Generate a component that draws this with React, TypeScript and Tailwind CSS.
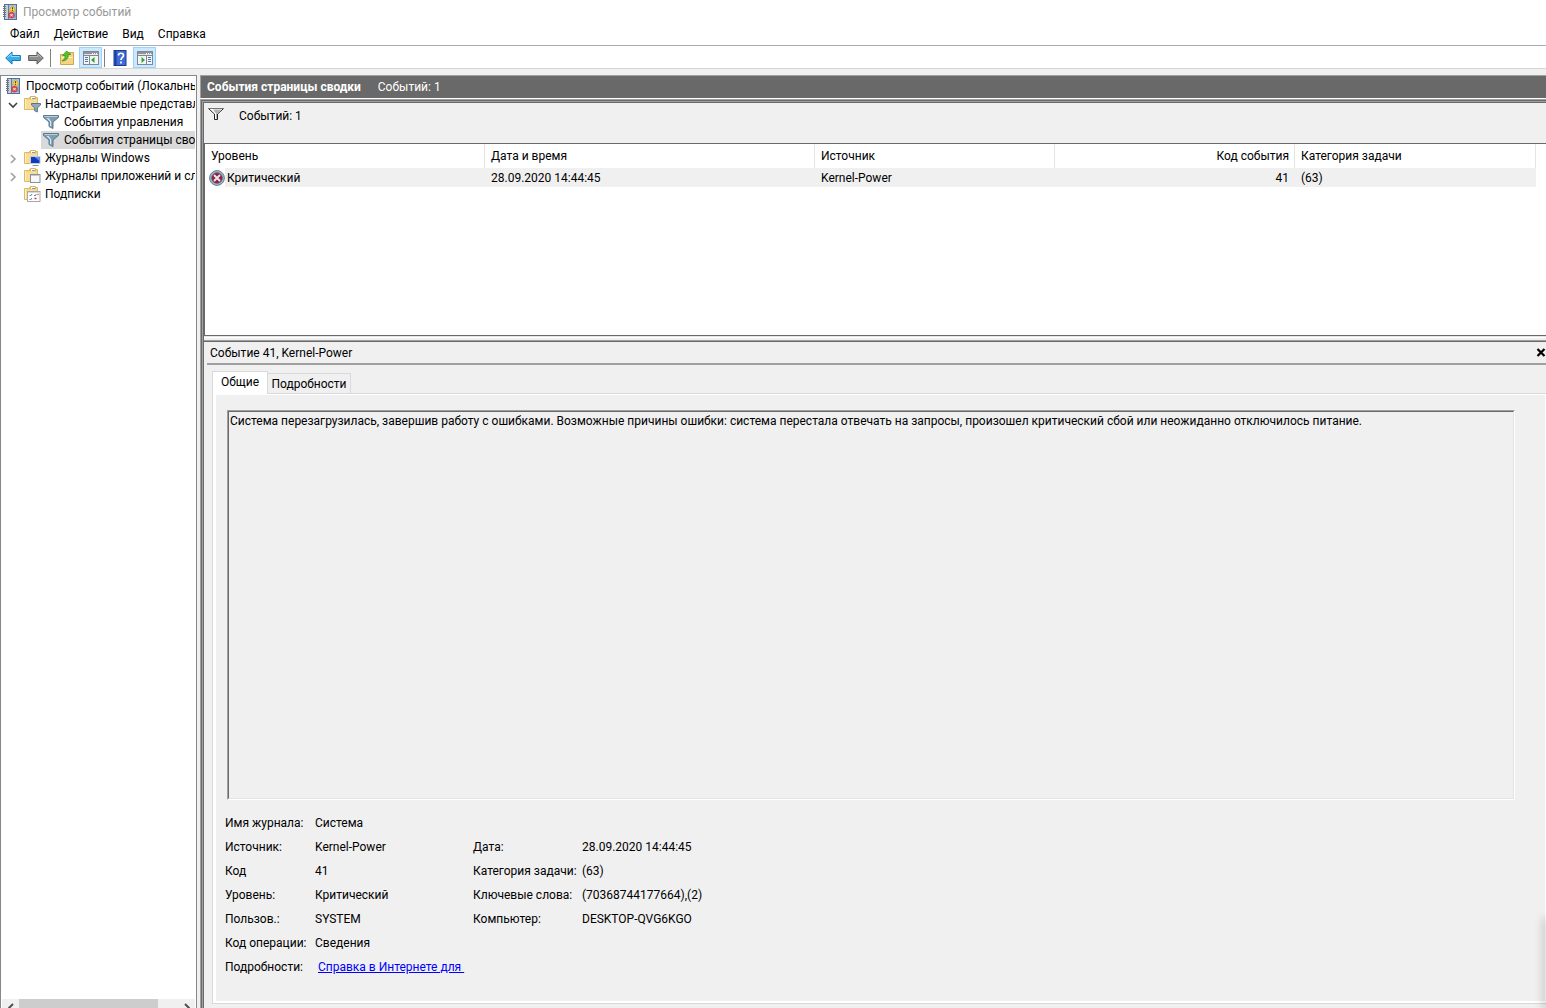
import React from 'react';

type IconProps = { className?: string };

function EventViewerIcon({ className = 'size-4 shrink-0' }: IconProps) {
  return (
    <svg viewBox="0 0 16 16" className={className} aria-hidden="true">
      <rect x="1.500" y="0.500" width="12" height="15" fill="#a9c3e4" stroke="#56709a" />
      <rect x="2" y="1" width="3" height="14" fill="#c9ced6" />
      <path d="M5.500 1v14" stroke="#5f7ba6" />
      <path d="M0 2.500h3M0 4.500h3M0 6.500h3M0 8.500h3M0 10.500h3M0 12.500h3" stroke="#6f757d" />
      <path d="M9.500 1.200l3.500 6H6z" fill="#ffd73b" stroke="#c69a17" strokeWidth="0.6" />
      <path d="M9.500 3.300v2M9.500 6v.8" stroke="#4c3a00" strokeWidth="1" />
      <circle cx="8.500" cy="11.200" r="2.900" fill="#e0524b" stroke="#b52f2a" strokeWidth="0.6" />
      <path d="M7.300 10l2.400 2.400M9.700 10l-2.400 2.400" stroke="#fff" strokeWidth="0.9" />
      <path d="M12 8.500v5.500" stroke="#6786b5" />
    </svg>
  );
}

function FolderBase() {
  return (
    <>
      <path d="M.5 2.500h5v-1h8v12H.5z" fill="#f3d68a" stroke="#dcb962" />
      <path d="M6.500 3V.5h5V3" fill="#fff" stroke="#d9b35a" />
      <path d="M8 2.500h3" stroke="#5fa6e8" />
      <path d="M1 4h12v9H1z" fill="#f9dd95" />
      <path d="M1.500 3v10" stroke="#fff0c4" />
    </>
  );
}

function FunnelIcon() {
  return (
    <svg viewBox="0 0 16 16" className="size-4 shrink-0" aria-hidden="true">
      <path d="M.5 1.500h15v2l-5.500 4.500v6.500l-4-2V8L.5 3.500z" fill="#7d9db4" stroke="#56707f" strokeWidth="0.9" />
      <path d="M1.500 2.500h13" stroke="#b9cfdc" />
      <path d="M3.500 4L7 7.500V12l1.200.6V7.500L5.500 4z" fill="#dbe9f2" />
    </svg>
  );
}

function FolderIcon({ kind }: { kind: 'filter' | 'windows' | 'apps' | 'subs' }) {
  return (
    <svg viewBox="0 0 17 16" className="h-4 w-[17px] shrink-0 overflow-visible" aria-hidden="true">
      <FolderBase />
      {kind === 'filter' && (
        <path d="M7.500 7.500h9v1.500l-3.200 3v4l-2.600-1.200V12L7.500 9z" fill="#8fabc0" stroke="#506b80" strokeWidth="0.9" />
      )}
      {kind === 'windows' && (
        <>
          <rect x="6.500" y="6.500" width="9.500" height="7" fill="#0b3bc0" stroke="#c5ccd8" />
          <path d="M10.500 7h5v4z" fill="#5b8df0" />
          <path d="M8.500 15.500h6" stroke="#8b93a0" />
        </>
      )}
      {kind === 'apps' && (
        <>
          <rect x="6.500" y="6.500" width="9.500" height="8" fill="#f7f8fa" stroke="#8a909a" />
          <path d="M7 7.500h8.500" stroke="#c3c9d2" />
        </>
      )}
      {kind === 'subs' && (
        <>
          <rect x="3.500" y="5.500" width="12.500" height="10" fill="#fff" stroke="#a5a9af" />
          <path d="M4 6.500h12" stroke="#d7dade" />
          <path d="M5.500 9l1 1 1.500-2M10 9l1 1 1.500-2M5.500 13l1 1 1.500-2" stroke="#5574a8" fill="none" strokeWidth="0.9" />
          <path d="M10.500 12.500h2M13.500 8.500h1" stroke="#d83a34" strokeWidth="1.500" />
        </>
      )}
    </svg>
  );
}

function ArrowIcon({ dir }: { dir: 'back' | 'forward' }) {
  return dir === 'back' ? (
    <svg viewBox="0 0 16 14" className="h-[14px] w-4" aria-hidden="true">
      <path d="M.7 7L7 .9v3.600h8.400v5H7v3.600z" fill="#35b0ee" stroke="#2274b4" />
      <path d="M2.300 6.700L6.200 3v2.500h8.200" stroke="#96dcfb" fill="none" />
    </svg>
  ) : (
    <svg viewBox="0 0 16 14" className="h-[14px] w-4" aria-hidden="true">
      <path d="M15.300 7L9 .9v3.600H.6v5H9v3.600z" fill="#8c8c8c" stroke="#5d5d5d" />
      <path d="M1.500 5.500H10V3l3.500 3.700" stroke="#b9b9b9" fill="none" />
    </svg>
  );
}

function UpFolderIcon() {
  return (
    <svg viewBox="0 0 16 16" className="size-4" aria-hidden="true">
      <path d="M1.500 4.500h7l1-2h5v12h-13z" fill="#f5d583" stroke="#cda650" />
      <path d="M2 7.500h12" stroke="#fdeebb" />
      <path d="M3 11C5.500 10 6.200 8 6 5.500H3.500L7.500 1l4.500 3.500H9.200C9.500 8.500 7 11 3 11z" fill="#56c22d" stroke="#2f8f1d" strokeWidth="0.700" />
    </svg>
  );
}

function PaneIcon({ side }: { side: 'left' | 'right' }) {
  return (
    <svg viewBox="0 0 16 14" className="h-[14px] w-4" aria-hidden="true">
      <rect x=".5" y=".5" width="15" height="13" fill="#f4f5f6" stroke="#83888e" />
      <path d="M1 2h14" stroke="#8f9499" strokeWidth="2" />
      <path d="M1 3.500h14" stroke="#e4e7ea" />
      <path d="M1 4.500h14" stroke="#83888e" />
      <path d="M9 2.500h1M11 2.500h1M13 2.500h1" stroke="#fff" />
      {side === 'left' ? (
        <>
          <path d="M6.500 5v8" stroke="#83888e" />
          <path d="M2 6.500h3M2 8.500h3M2 10.500h3" stroke="#3f78b8" />
          <path d="M11.500 6v6l-3.500-3z" fill="#35a52a" />
        </>
      ) : (
        <>
          <path d="M9.500 5v8" stroke="#83888e" />
          <path d="M11 6.500h3M11 8.500h3M11 10.500h3" stroke="#3f78b8" />
          <path d="M4.500 6v6l3.500-3z" fill="#35a52a" />
        </>
      )}
    </svg>
  );
}

function HelpIcon() {
  return (
    <svg viewBox="0 0 14 16" className="h-4 w-[14px]" aria-hidden="true">
      <rect x="1" y=".5" width="12" height="15" fill="#3f6bd6" stroke="#1e3b96" />
      <path d="M2.500 1v14" stroke="#1c3fa3" strokeWidth="2" />
      <path d="M5.500 5.500c0-3 5-3 5 0 0 2-2.500 2-2.500 4.500M8 11.500v2" stroke="#fff" strokeWidth="1.700" fill="none" />
    </svg>
  );
}

function CriticalIcon() {
  return (
    <svg viewBox="0 0 16 16" className="size-4 shrink-0" aria-hidden="true">
      <circle cx="8" cy="8" r="7.400" fill="#9fb6c8" stroke="#64829b" />
      <circle cx="8" cy="8" r="5.300" fill="#94203f" stroke="#6c5970" strokeWidth="0.800" />
      <path d="M5 5l6 6M11 5l-6 6" stroke="#e9eaf0" strokeWidth="1.900" />
    </svg>
  );
}

function OutlineFunnelIcon() {
  return (
    <svg viewBox="0 0 16 12" className="h-3 w-4 shrink-0" aria-hidden="true">
      <path d="M1 1l5.500 5v5.500h3V6L15 1z" fill="#fff" />
      <path d="M5 1.500h8L9 5.500v5H8V5.500z" fill="#b0b0b0" />
      <path d="M0 .5h16" stroke="#777" />
      <path d="M1 1l5.500 5v5.500h3V6L15 1" fill="none" stroke="#222" />
    </svg>
  );
}

function Chevron({ open }: { open: boolean }) {
  return (
    <svg viewBox="0 0 10 10" className="size-[10px]" aria-hidden="true">
      {open ? (
        <path d="M1 3l4 4 4-4" fill="none" stroke="#404040" strokeWidth="1.600" />
      ) : (
        <path d="M3 1l4 4-4 4" fill="none" stroke="#a0a0a0" strokeWidth="1.600" />
      )}
    </svg>
  );
}

function TreeRow({
  label,
  icon,
  indent,
  open,
  selected,
}: {
  label: string;
  icon: React.ReactNode;
  indent: 'root' | 'folder' | 'leaf';
  open?: boolean;
  selected?: boolean;
}) {
  const pad = indent === 'root' ? 'pl-1' : indent === 'folder' ? 'pl-[22px]' : 'pl-[39px]';
  const gap = indent === 'leaf' ? 'gap-[5px] pl-[2px]' : 'gap-1';
  return (
    <li className={`relative flex h-[18px] ${pad}`}>
      {open !== undefined && (
        <button className="absolute top-[5px] left-[6px]" aria-label={open ? 'Свернуть' : 'Развернуть'}>
          <Chevron open={open} />
        </button>
      )}
      <button
        className={`flex min-w-0 flex-1 items-center overflow-hidden whitespace-nowrap ${gap} ${
          selected ? 'bg-[#d9d9d9]' : ''
        }`}
      >
        {icon}
        <span>{label}</span>
      </button>
    </li>
  );
}

const details: [string, string, string?, string?][] = [
  ['Имя журнала:', 'Система'],
  ['Источник:', 'Kernel-Power', 'Дата:', '28.09.2020 14:44:45'],
  ['Код', '41', 'Категория задачи:', '(63)'],
  ['Уровень:', 'Критический', 'Ключевые слова:', '(70368744177664),(2)'],
  ['Пользов.:', 'SYSTEM', 'Компьютер:', 'DESKTOP-QVG6KGO'],
  ['Код операции:', 'Сведения'],
];

function MenuBar() {
  return (
    <nav className="flex h-[22px] items-center gap-[14px] bg-white px-[10px]">
      {['Файл', 'Действие', 'Вид', 'Справка'].map((item) => (
        <button key={item}>{item}</button>
      ))}
    </nav>
  );
}

function Toolbar() {
  return (
    <div className="flex h-6 items-center border-y border-t-[#acacb4] border-b-[#d7d7d7] bg-white pt-px pl-[5px]">
      <button aria-label="Назад"><ArrowIcon dir="back" /></button>
      <button className="ml-[7px]" aria-label="Вперед"><ArrowIcon dir="forward" /></button>
      <span className="ml-[6px] h-[18px] w-px bg-[#808080]" />
      <button className="ml-2" aria-label="Вверх"><UpFolderIcon /></button>
      <button className="ml-1 flex h-[21px] w-[23px] items-center justify-center border border-[#99d1ff] bg-[#cce8ff] pt-px" aria-label="Дерево консоли">
        <PaneIcon side="left" />
      </button>
      <span className="ml-[2px] h-[18px] w-px bg-[#808080]" />
      <button className="ml-2" aria-label="Справка"><HelpIcon /></button>
      <button className="ml-[6px] flex h-[21px] w-[23px] items-center justify-center border border-[#99d1ff] bg-[#cce8ff] pt-px" aria-label="Панель действий">
        <PaneIcon side="right" />
      </button>
    </div>
  );
}

function ConsoleTree() {
  return (
    <aside className="flex w-[197px] shrink-0 flex-col border border-b-0 border-[#828790] bg-white px-px">
      <ul className="pt-px">
        <TreeRow indent="root" icon={<EventViewerIcon />} label="Просмотр событий (Локальный)" />
        <TreeRow indent="folder" open icon={<FolderIcon kind="filter" />} label="Настраиваемые представления" />
        <TreeRow indent="leaf" icon={<FunnelIcon />} label="События управления" />
        <TreeRow indent="leaf" selected icon={<FunnelIcon />} label="События страницы сводки" />
        <TreeRow indent="folder" open={false} icon={<FolderIcon kind="windows" />} label="Журналы Windows" />
        <TreeRow indent="folder" open={false} icon={<FolderIcon kind="apps" />} label="Журналы приложений и служб" />
        <TreeRow indent="folder" icon={<FolderIcon kind="subs" />} label="Подписки" />
      </ul>
      <div className="mt-auto flex h-[9px] overflow-hidden bg-[#f0f0f0]">
        <button className="flex w-[17px] justify-center pt-1" aria-label="Прокрутить влево">
          <svg viewBox="0 0 6 10" className="h-[10px] w-[6px]"><path d="M5 1L1 5l4 4" fill="none" stroke="#505050" strokeWidth="2" /></svg>
        </button>
        <div className="w-[139px] bg-[#cdcdcd]" />
        <button className="ml-auto flex w-[17px] justify-center pt-1" aria-label="Прокрутить вправо">
          <svg viewBox="0 0 6 10" className="h-[10px] w-[6px]"><path d="M1 1l4 4-4 4" fill="none" stroke="#505050" strokeWidth="2" /></svg>
        </button>
      </div>
    </aside>
  );
}

function EventTable() {
  return (
    <div className="h-[193px] shrink-0 border-y border-l border-[#696969] bg-white">
      <table className="w-full table-fixed border-separate border-spacing-0 text-left">
        <colgroup>
          <col className="w-[280px]" />
          <col className="w-[330px]" />
          <col className="w-[240px]" />
          <col className="w-[240px]" />
          <col />
          <col className="w-[10px]" />
        </colgroup>
        <thead>
          <tr className="h-6">
            {['Уровень', 'Дата и время', 'Источник', 'Код события', 'Категория задачи'].map((h) => (
              <th
                key={h}
                className={`border-r border-[#e5e5e5] p-0 font-normal ${h === 'Код события' ? 'pr-[5px] text-right' : 'pl-[6px]'}`}
              >
                {h}
              </th>
            ))}
            <td />
          </tr>
        </thead>
        <tbody>
          <tr className="h-[19px]">
            <td className="p-0 pl-1">
              <div className="flex items-center">
                <CriticalIcon />
                <span className="h-[19px] flex-1 bg-[#f0f0f0] pt-px pl-[2px] leading-[18px]">Критический</span>
              </div>
            </td>
            <td className="bg-[#f0f0f0] p-0 pl-[6px]">28.09.2020 14:44:45</td>
            <td className="bg-[#f0f0f0] p-0 pl-[6px]">Kernel-Power</td>
            <td className="bg-[#f0f0f0] p-0 pr-[6px] text-right">41</td>
            <td className="bg-[#f0f0f0] p-0 pl-[6px]">(63)</td>
            <td />
          </tr>
        </tbody>
      </table>
    </div>
  );
}

function EventDetails() {
  return (
    <section className="flex min-h-0 flex-1 flex-col border-t border-[#a0a0a0]">
      <div className="flex min-h-0 flex-1 flex-col border-t border-[#696969]">
        <header className="ml-[3px] flex h-[23px] items-center justify-between border-b-2 border-[#a0a0a0] pl-[3px]">
          <h2>Событие 41, Kernel-Power</h2>
          <button aria-label="Закрыть">
            <svg viewBox="0 0 10 10" className="size-[10px]"><path d="M1.500 1l7 7M8.500 1l-7 7" stroke="#000" strokeWidth="2.200" /></svg>
          </button>
        </header>
        <div role="tablist" className="mt-[6px] ml-2 flex h-[22px] items-end">
          <button role="tab" aria-selected="true" className="relative z-10 -mb-px h-[23px] w-14 border border-b-0 border-[#d9d9d9] bg-white pb-[3px]">
            Общие
          </button>
          <button role="tab" aria-selected="false" className="-ml-px h-5 w-[84px] border border-b-0 border-[#d9d9d9]">
            Подробности
          </button>
        </div>
        <div role="tabpanel" className="mb-1 ml-2 flex min-h-0 flex-1 flex-col border border-r-0 border-[#d9d9d9]">
          <div className="flex min-h-0 flex-1 flex-col border-t border-r border-b-2 border-l-3 border-white pt-[15px] pr-[30px] pb-[22px] pl-[11px]">
            <div className="flex min-h-0 flex-1 border border-t-[#a0a0a0] border-r-white border-b-white border-l-[#a0a0a0]">
              <p className="flex-1 border border-t-[#696969] border-r-[#e3e3e3] border-b-[#e3e3e3] border-l-[#696969] pl-px leading-[18px]">
                Система перезагрузилась, завершив работу с ошибками. Возможные причины ошибки: система перестала отвечать на запросы, произошел критический сбой или неожиданно отключилось питание.
              </p>
            </div>
            <dl className="-ml-[2px] mt-[11px] grid shrink-0 auto-rows-[24px] grid-cols-[90px_158px_109px_1fr] items-center whitespace-nowrap">
              {details.map(([a, b, c, d]) => (
                <React.Fragment key={a}>
                  <dt>{a}</dt>
                  <dd className={c ? '' : 'col-span-3'}>{b}</dd>
                  {c && <dt>{c}</dt>}
                  {d && <dd>{d}</dd>}
                </React.Fragment>
              ))}
              <dt>Подробности:</dt>
              <dd className="col-span-3 pl-[3px]">
                <a href="#help" className="whitespace-pre text-[#0000ff] underline">{'Справка в Интернете для '}</a>
              </dd>
            </dl>
          </div>
        </div>
      </div>
    </section>
  );
}

export default function App() {
  return (
    <div className="relative flex h-screen flex-col overflow-hidden bg-[#f0f0f0] font-['Roboto',sans-serif] text-[12px] leading-4 text-black">
      <header className="flex h-[23px] items-center gap-1 bg-white pl-[3px] text-[#999]">
        <EventViewerIcon />
        <h1>Просмотр событий</h1>
      </header>
      <MenuBar />
      <Toolbar />
      <div className="mt-[6px] flex min-h-0 flex-1 gap-[3px]">
        <ConsoleTree />
        <main className="flex min-w-0 flex-1 flex-col">
          <header className="flex h-[23px] shrink-0 items-center gap-[17px] border-t border-l border-[#a0a0a0] bg-[#696969] pl-[6px] text-white">
            <strong className="font-bold">События страницы сводки</strong>
            <span>Событий: 1</span>
          </header>
          <div className="flex min-h-0 flex-1 flex-col border-t border-white">
            <div className="flex min-h-0 flex-1 border-t border-l border-[#a0a0a0]">
              <div className="flex min-w-0 flex-1 border-t border-l border-[#696969]">
                <div className="flex min-w-0 flex-1 border-t border-l border-[#a0a0a0]">
                  <div className="flex min-w-0 flex-1 flex-col border-t border-l border-[#696969]">
                    <div className="flex h-10 shrink-0 items-start gap-[15px] pt-[5px] pl-1">
                      <OutlineFunnelIcon />
                      <span>Событий: 1</span>
                    </div>
                    <EventTable />
                    <div className="mb-[2px] h-[2px] shrink-0 border-t border-[#e3e3e3] bg-white" />
                    <EventDetails />
                  </div>
                </div>
              </div>
            </div>
          </div>
        </main>
      </div>
      <div className="pointer-events-none absolute top-[920px] -right-px bottom-0 w-px shadow-[0_0_10px_2px_rgba(0,0,0,0.25)]" />
    </div>
  );
}
